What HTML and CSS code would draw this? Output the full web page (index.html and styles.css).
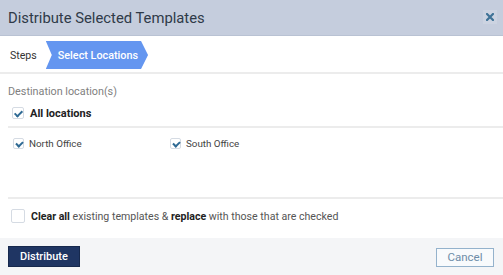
FILE: index.html
```html
<!DOCTYPE html>
<html lang="en">
<head>
  <meta charset="UTF-8">
  <title>Distribute Selected Templates</title>
  <link rel="stylesheet" href="styles.css">
</head>
<body>
  <div class="modal">
    <!-- Header -->
    <div class="modal-header">
      <h1 class="modal-title">Distribute Selected Templates</h1>
      <button class="close-btn" aria-label="Close">
        <svg width="8" height="8" viewBox="0 0 8 8">
          <path d="M1 1L7 7M7 1L1 7" stroke="#3f7296" stroke-width="2.2" stroke-linecap="square"/>
        </svg>
      </button>
    </div>

    <!-- Steps -->
    <div class="steps">
      <span class="steps-label">Steps</span>
      <span class="step active">Select Locations</span>
    </div>

    <!-- Body -->
    <div class="modal-body">
      <div class="field-label">Destination location(s)</div>
      <label class="check all">
        <span class="box checked"></span>
        <span>All locations</span>
      </label>
      <div class="loc-grid">
        <label class="check small">
          <span class="box checked"></span>
          <span>North Office</span>
        </label>
        <label class="check small">
          <span class="box checked"></span>
          <span>South Office</span>
        </label>
      </div>
      <div class="replace-row">
        <label class="check">
          <span class="box"></span>
          <span><b>Clear all</b> existing templates &amp; <b>replace</b> with those that are checked</span>
        </label>
      </div>
    </div>

    <!-- Footer -->
    <div class="modal-footer">
      <button class="btn primary">Distribute</button>
      <button class="btn secondary">Cancel</button>
    </div>
  </div>
</body>
</html>
```

FILE: styles.css
```css
/* ---------- base ---------- */
* { margin: 0; padding: 0; box-sizing: border-box; }
html, body { width: 100%; height: 100%; overflow: hidden; background: #fff; }
body { font-family: Roboto, "Liberation Sans", sans-serif; color: #333; }

.modal { display: flex; flex-direction: column; height: 275px; }

/* ---------- header ---------- */
.modal-header {
  height: 36px; background: #c5cddd;
  display: flex; align-items: center; justify-content: space-between;
  padding: 0 6px 0 8px;
  border-bottom: 1px solid #b9c2d3;
}
.modal-title { font-size: 14.8px; font-weight: 400; color: #2f3a48; }
.close-btn {
  width: 14px; height: 14px; border: none; background: #ccd3e1;
  display: flex; align-items: center; justify-content: center;
  margin-top: -2px;
}

/* ---------- steps ---------- */
.steps {
  height: 38px; display: flex; align-items: center;
  padding: 0 0 0 10px;
  border-bottom: 2px solid #ececec;
}
.steps-label { font-size: 10.6px; color: #333; margin-right: 9px; margin-top: 2px; }
.step.active {
  height: 28px; display: flex; align-items: center;
  padding: 0 10px 0 12px; margin-top: 2px;
  background: #6496f0; color: #fff; font-size: 10.8px; font-weight: 500;
  clip-path: polygon(0 0, calc(100% - 7px) 0, 100% 50%, calc(100% - 7px) 100%, 0 100%, 6px 50%);
}

/* ---------- body ---------- */
.modal-body { flex: 1; padding: 11px 0 0 8px; }
.field-label { font-size: 10.8px; color: #808080; }

.check { display: flex; align-items: center; gap: 7px; font-size: 10.6px; color: #444; }
.check .box {
  width: 12px; height: 12px; border: 1px solid #d5dbe3; border-radius: 2px;
  background: #fff; position: relative; flex: none;
}
.check .box.checked::after {
  content: ''; position: absolute; left: 3px; top: 1px;
  width: 3px; height: 6px;
  border: solid #2f6a94; border-width: 0 2px 2px 0;
  transform: rotate(45deg);
}

.check.all { margin: 7px 0 0 4px; font-weight: 700; color: #222; font-size: 11px; height: 16px; gap: 6px; }
.loc-grid {
  display: grid; grid-template-columns: 157px 157px;
  border-top: 2px solid #ececec; margin-top: 5px; padding: 10px 0 0 5px;
  height: 71px;
}
.check.small { font-size: 9.8px; gap: 5px; align-self: start; color: #444; }
.check.small .box { width: 11px; height: 11px; }
.check.small .box.checked::after { left: 3px; top: 1px; width: 3px; height: 5px; }

.replace-row { border-top: 2px solid #ececec; padding: 10px 0 0 3px; }
.replace-row .check { gap: 6px; color: #555; }
.replace-row .box { width: 14px; height: 14px; }
.replace-row b { color: #222; }

/* ---------- footer ---------- */
.modal-footer {
  height: 37px; background: #f4f5f7;
  display: flex; align-items: center; justify-content: space-between;
  padding: 0 9px 0 8px;
}
.btn { font-family: inherit; font-size: 11px; cursor: pointer; }
.btn.primary {
  width: 72px; height: 21px; background: #1f3563; color: #fff;
  border: 1px solid #16284d; font-weight: 500;
}
.btn.secondary {
  width: 58px; height: 19px; background: #f8fafc; color: #6d8ca8;
  border: 1px solid #94b2cc; margin-top: 1px; font-size: 11.5px;
}
```
